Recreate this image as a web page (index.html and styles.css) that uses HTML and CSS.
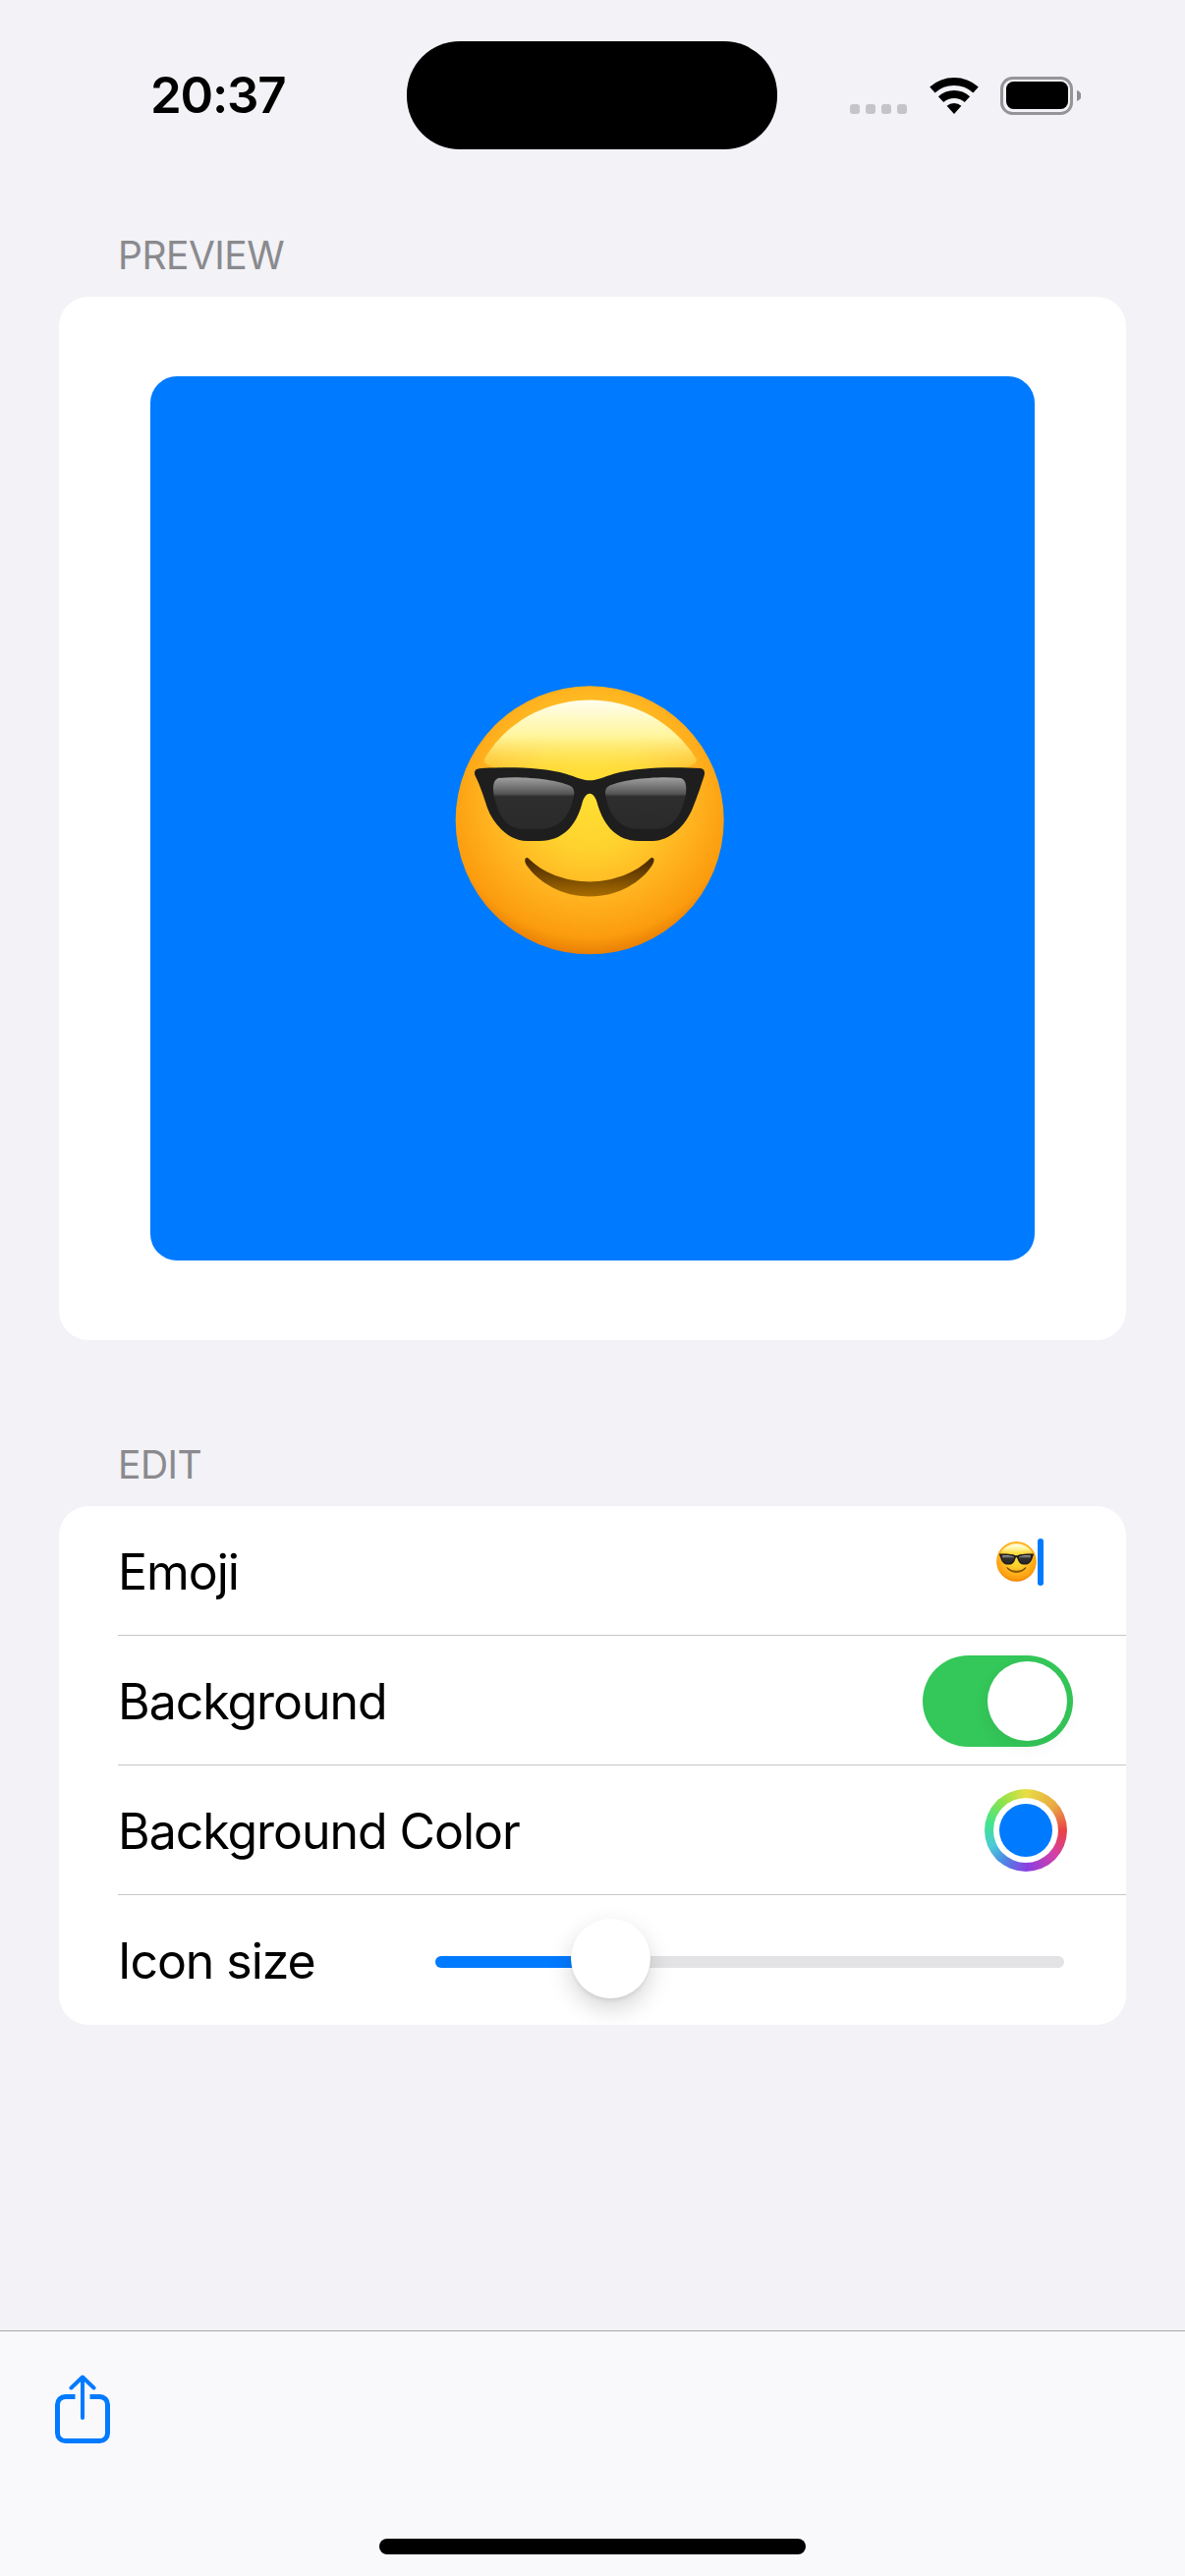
FILE: index.html
```html
<!DOCTYPE html>
<html lang="en">
<head>
<meta charset="utf-8">
<title>Icon editor</title>
<link rel="stylesheet" href="styles.css">
</head>
<body>
<svg class="defs" width="0" height="0" aria-hidden="true">
  <defs>
    <radialGradient id="faceFill" gradientUnits="userSpaceOnUse" cx="482" cy="380" r="490">
      <stop offset="0" stop-color="#ffe033"/>
      <stop offset="0.35" stop-color="#ffd22e"/>
      <stop offset="0.68" stop-color="#ffb01e"/>
      <stop offset="0.9" stop-color="#fb9c0d"/>
      <stop offset="1" stop-color="#e97f06"/>
    </radialGradient>
    <linearGradient id="faceShine" gradientUnits="userSpaceOnUse" x1="480" y1="95" x2="480" y2="345">
      <stop offset="0" stop-color="#fffef0"/>
      <stop offset="0.45" stop-color="#fff59c"/>
      <stop offset="1" stop-color="#ffe640" stop-opacity="0"/>
    </linearGradient>
    <linearGradient id="lensFill" gradientUnits="userSpaceOnUse" x1="0" y1="330" x2="0" y2="490">
      <stop offset="0" stop-color="#a4a4a4"/>
      <stop offset="0.33" stop-color="#555"/>
      <stop offset="0.38" stop-color="#2e2e2e"/>
      <stop offset="1" stop-color="#2a2a2a"/>
    </linearGradient>
    <linearGradient id="mouthFill" gradientUnits="userSpaceOnUse" x1="0" y1="590" x2="0" y2="695">
      <stop offset="0" stop-color="#4d2c00"/>
      <stop offset="1" stop-color="#a86c00"/>
    </linearGradient>
    <symbol id="cool-face" viewBox="72 54 822 822">
      <circle cx="482" cy="463" r="408" fill="url(#faceFill)"/>
      <path d="M160 280C225 165 350 97 482 97C615 97 740 165 808 280C800 315 690 305 560 325C520 332 500 345 482 345C460 345 440 332 400 325C270 305 165 315 160 280Z" fill="url(#faceShine)"/>
      <path d="M146 306C230 300 340 302 410 322C440 331 460 342 482 342C504 342 525 331 555 322C625 302 735 300 818 305C830 306 834 316 830 328C822 352 812 385 796 424C775 480 725 526 675 526L630 526C565 526 525 480 506 415C500 392 492 382 482 382C472 382 464 392 458 415C440 480 400 526 330 526L290 526C240 526 190 480 170 424C158 385 146 352 134 328C128 316 134 307 146 306Z" fill="#1e1e1e"/>
      <path d="M205 335C280 328 380 340 422 358C436 365 436 378 433 392C425 430 405 490 330 490L280 490C230 490 205 450 192 395C186 370 186 340 205 335Z" fill="url(#lensFill)"/>
      <path d="M759 335C684 328 584 340 542 358C528 365 528 378 531 392C539 430 559 490 634 490L684 490C734 490 759 450 772 395C778 370 778 340 759 335Z" fill="url(#lensFill)"/>
      <path d="M294 578C340 625 410 650 482 650C552 650 622 625 668 578C680 574 680 588 672 600C640 650 570 695 482 695C395 695 325 650 290 600C282 588 284 574 294 578Z" fill="url(#mouthFill)"/>
    </symbol>
  </defs>
</svg>

<div class="page">
  <header class="status">
    <span class="time">20:37</span>
    <div class="island"></div>
    <svg class="status-icons" width="235" height="40" viewBox="0 0 235 40" aria-hidden="true">
      <g fill="#c5c5c9">
        <rect x="0" y="28" width="10" height="10" rx="3"/>
        <rect x="16" y="28" width="10" height="10" rx="3"/>
        <rect x="32" y="28" width="10" height="10" rx="3"/>
        <rect x="48" y="28" width="10" height="10" rx="3"/>
      </g>
      <g fill="none" stroke="#000" stroke-width="8">
        <path d="M83.900 13.500A33 33 0 0 1 128.100 13.500"/>
        <path d="M92.600 23.100A20 20 0 0 1 119.400 23.100"/>
      </g>
      <path d="M106 38L98.600 29.800A11 11 0 0 1 113.400 29.800Z" fill="#000"/>
      <rect x="154.500" y="1.500" width="71" height="36" rx="11" fill="none" stroke="#959598" stroke-width="3"/>
      <rect x="159" y="5" width="63" height="28" rx="7.500" fill="#000"/>
      <path d="M231 14C234 15 235.500 17 235.500 19.500C235.500 22 234 24 231 25Z" fill="#8e8e92"/>
    </svg>
  </header>

  <main class="content">
    <h2 class="section-label">PREVIEW</h2>
    <section class="card preview-card">
      <div class="preview-tile">
        <svg class="preview-emoji" role="img" aria-label="Smiling face with sunglasses"><use href="#cool-face"/></svg>
      </div>
    </section>

    <h2 class="section-label section-label-edit">EDIT</h2>
    <section class="card">
      <div class="row">
        <span class="row-title">Emoji</span>
        <div class="emoji-field">
          <svg class="field-emoji" role="img" aria-label="Smiling face with sunglasses"><use href="#cool-face"/></svg>
          <span class="caret"></span>
        </div>
      </div>
      <div class="row">
        <span class="row-title">Background</span>
        <div class="toggle"><span class="toggle-knob"></span></div>
      </div>
      <div class="row">
        <span class="row-title">Background Color</span>
        <div class="color-well"><div class="color-gap"><div class="color-dot"></div></div></div>
      </div>
      <div class="row row-last">
        <span class="row-title row-title-slider">Icon size</span>
        <div class="slider">
          <div class="slider-fill" style="width: 27.8%"></div>
          <div class="slider-thumb" style="left: 27.8%"></div>
        </div>
      </div>
    </section>
  </main>

  <footer class="toolbar">
    <svg class="share-icon" width="56" height="70" viewBox="0 0 56 70" fill="none" stroke="#007aff" stroke-linecap="round" stroke-linejoin="round" role="img" aria-label="Share">
      <path stroke-width="5" stroke-linecap="butt" d="M20.500 22.500H10.500A8 8 0 0 0 2.500 30.500V59.500A8 8 0 0 0 10.500 67.500H45.500A8 8 0 0 0 53.500 59.500V30.500A8 8 0 0 0 45.500 22.500H35.500"/>
      <path stroke-width="4" d="M28 3V44"/>
      <path stroke-width="4" d="M16.500 13.500L28 2.500L39.500 13.500"/>
    </svg>
    <div class="home-indicator"></div>
  </footer>
</div>
</body>
</html>
```

FILE: styles.css
```css
* {
  box-sizing: border-box;
}

html,
body {
  margin: 0;
  padding: 0;
}

body {
  background: #f2f2f7;
  font-family: Inter, "Liberation Sans", sans-serif;
  color: #000;
}

.defs {
  position: absolute;
}

.page {
  width: 1206px;
  height: 2622px;
  display: flex;
  flex-direction: column;
  overflow: hidden;
}

/* Status bar */
.status {
  position: relative;
  height: 230px;
  flex: none;
  display: flex;
  justify-content: space-between;
  align-items: flex-start;
  padding: 77px 106px 0 153px;
}

.time {
  font-size: 51px;
  font-weight: 600;
  line-height: 40px;
  letter-spacing: -1.2px;
}

.island {
  position: absolute;
  left: 414px;
  top: 42px;
  width: 377px;
  height: 110px;
  border-radius: 54px;
  background: #000;
}

.status-icons {
  display: block;
  margin-top: 1px;
}

/* Content */
.content {
  flex: 1;
  padding: 0 60px;
}

.section-label {
  margin: 0 0 12px;
  padding-left: 60px;
  font-size: 39px;
  font-weight: 400;
  line-height: 60px;
  letter-spacing: -0.5px;
  color: #8a8a8e;
}

.section-label-edit {
  margin-top: 97px;
}

.card {
  background: #fff;
  border-radius: 30px;
  overflow: hidden;
}

.preview-card {
  height: 1062px;
  padding: 81px 93px;
}

.preview-tile {
  width: 900px;
  height: 900px;
  border-radius: 27px;
  background: #007aff;
  display: flex;
  align-items: center;
  justify-content: center;
}

.preview-emoji {
  width: 275px;
  height: 275px;
  margin: 4px 5px 0 0;
}

/* Rows */
.row {
  height: 132px;
  margin-left: 60px;
  display: flex;
  align-items: center;
  justify-content: space-between;
  border-bottom: 1px solid #c6c6c8;
}

.row-last {
  border-bottom: 0;
}

.row-title {
  font-size: 50px;
  font-weight: 400;
  line-height: 60px;
  letter-spacing: -1.05px;
  padding-top: 2px;
}

.row-title-slider {
  flex: 0 0 323px;
}

.emoji-field {
  display: flex;
  align-items: center;
  gap: 1px;
  margin: 0 84px 18px 0;
}

.field-emoji {
  width: 41px;
  height: 41px;
}

.caret {
  width: 6px;
  height: 48px;
  border-radius: 3px;
  background: #007aff;
}

.toggle {
  width: 153px;
  height: 93px;
  margin: 1px 54px 0 0;
  padding: 6px;
  border-radius: 47px;
  background: #34c759;
  display: flex;
  justify-content: flex-end;
}

.toggle-knob {
  width: 81px;
  height: 81px;
  border-radius: 50%;
  background: #fff;
  box-shadow: 0 6px 18px rgba(0, 0, 0, 0.06);
}

.color-well {
  width: 84px;
  height: 84px;
  margin: 1px 60px 0 0;
  padding: 9px;
  border-radius: 50%;
  background: conic-gradient(#e8de45 0deg, #e9a844 50deg, #ea4345 90deg, #d23fa6 130deg, #8a3fe2 178deg, #4d86e4 215deg, #4ccbd8 245deg, #41e38f 280deg, #8de34a 320deg, #e8de45 360deg);
}

.color-gap {
  width: 100%;
  height: 100%;
  padding: 6px;
  border-radius: 50%;
  background: #fff;
}

.color-dot {
  width: 100%;
  height: 100%;
  border-radius: 50%;
  background: #007aff;
}

.slider {
  position: relative;
  flex: 1;
  height: 12px;
  margin: 4px 63px 0 0;
  border-radius: 6px;
  background: #e3e3e5;
}

.slider-fill {
  height: 100%;
  border-radius: 6px 0 0 6px;
  background: #007aff;
}

.slider-thumb {
  position: absolute;
  top: -38px;
  width: 81px;
  height: 81px;
  margin-left: -40px;
  border-radius: 50%;
  background: #fff;
  box-shadow: 0 3px 3px rgba(0, 0, 0, 0.06), 0 10px 24px rgba(0, 0, 0, 0.17);
}

/* Toolbar */
.toolbar {
  position: relative;
  height: 250px;
  flex: none;
  padding: 44px 0 0 56px;
  border-top: 1px solid #a9a9ac;
  background: #f9f9fc;
}

.share-icon {
  display: block;
}

.home-indicator {
  position: absolute;
  left: 386px;
  top: 211px;
  width: 434px;
  height: 16px;
  border-radius: 8px;
  background: #000;
}
```
